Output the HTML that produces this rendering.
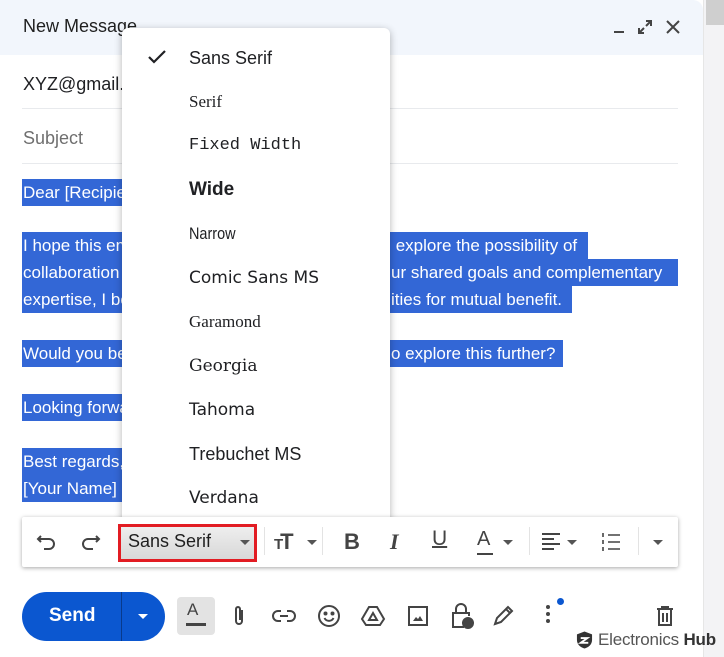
<!DOCTYPE html>
<html><head><meta charset="utf-8"><style>
*{margin:0;padding:0;box-sizing:border-box}
body{width:724px;height:657px;overflow:hidden;background:#fff;font-family:"Liberation Sans",Arial,sans-serif;position:relative;color:#202124}
.abs{position:absolute}
.hdr{left:0;top:0;width:703px;height:55px;background:#f2f6fc;border-top-right-radius:10px}
.rs{left:703px;top:0;width:21px;height:657px;background:#f3f3f5;border-left:1px solid #e6e6e6}
.hl{position:absolute;background:#3367d6;color:#fff;font-size:17px;line-height:27px;white-space:nowrap;overflow:hidden;padding-left:1px}
.menu{left:122px;top:28px;width:268px;height:499px;background:#fff;border-radius:6px;box-shadow:0 2px 8px rgba(0,0,0,.3)}
.mi{position:absolute;left:67px;font-size:18px;color:#202124;white-space:nowrap;line-height:22px}
.tb{left:22px;top:517px;width:656px;height:50px;background:#fff;box-shadow:0 1px 4px rgba(0,0,0,.35);border-radius:2px}
.ic{position:absolute;stroke:#444;fill:none;stroke-width:2}
.sep{position:absolute;top:10px;width:1px;height:28px;background:#e3e3e3}
</style></head><body>
<div class="abs rs"><div class="abs" style="left:2px;top:0;width:19px;height:25px;background:#cfcfcf"></div></div>
<div class="abs hdr"></div>
<div class="abs" style="left:23px;top:16px;font-size:18px;color:#1f1f1f">New Message</div>
<div class="abs" style="left:614px;top:31px;width:10px;height:2px;background:#444"></div>
<svg class="abs" style="left:637px;top:19px" width="16" height="16" viewBox="0 0 16 16"><path d="M9 2h5v5M14 2L9 7M7 14H2V9M2 14l5-5" stroke="#444" stroke-width="2" fill="none"/></svg>
<svg class="abs" style="left:666px;top:20px" width="14" height="14" viewBox="0 0 14 14"><path d="M1 1l12 12M13 1L1 13" stroke="#444" stroke-width="2"/></svg>
<div class="abs" style="left:23px;top:74px;font-size:18px">XYZ@gmail.com</div>
<div class="abs" style="left:22px;top:108px;width:656px;height:1px;background:#e8eaed"></div>
<div class="abs" style="left:23px;top:128px;font-size:18px;color:#6f6f6f">Subject</div>
<div class="abs" style="left:22px;top:163px;width:656px;height:1px;background:#e8eaed"></div>

<div class="hl" style="left:22px;top:179px;width:110px">Dear [Recipient's Name],</div>
<div class="hl" style="left:22px;top:206px;width:5px"></div>
<div class="hl" style="left:22px;top:232px;width:110px">I hope this email finds you well.</div>
<div class="hl" style="left:22px;top:259px;width:110px">collaboration between us.</div>
<div class="hl" style="left:22px;top:286px;width:110px">expertise, I believe</div>
<div class="hl" style="left:22px;top:313px;width:5px"></div>
<div class="hl" style="left:22px;top:340px;width:110px">Would you be available</div>
<div class="hl" style="left:22px;top:367px;width:5px"></div>
<div class="hl" style="left:22px;top:394px;width:110px">Looking forward</div>
<div class="hl" style="left:22px;top:421px;width:5px"></div>
<div class="hl" style="left:22px;top:448px;width:110px">Best regards,</div>
<div class="hl" style="left:22px;top:475px;width:100px">[Your Name]</div>
<div class="hl" style="left:390px;top:232px;width:198px">&nbsp;explore the possibility of</div>
<div class="hl" style="left:390px;top:259px;width:288px">ur shared goals and complementary</div>
<div class="hl" style="left:390px;top:286px;width:182px">ities for mutual benefit.</div>
<div class="hl" style="left:390px;top:340px;width:173px">o explore this further?</div>

<div class="abs menu">
<svg class="abs" style="left:26px;top:22px" width="18" height="14" viewBox="0 0 18 14"><path d="M1 7l5 5L17 1" stroke="#202124" stroke-width="2.2" fill="none"/></svg>
<div class="mi" style="top:19px">Sans Serif</div>
<div class="mi" style="top:63px;font-family:'Liberation Serif',serif;font-size:17px">Serif</div>
<div class="mi" style="top:107px;font-family:'Liberation Mono',monospace;font-size:17px">Fixed Width</div>
<div class="mi" style="top:151px;font-weight:bold;font-size:19px">Wide</div>
<div class="mi" style="top:195px;font-size:17px;transform:scaleX(.85);transform-origin:left">Narrow</div>
<div class="mi" style="top:239px;font-family:'DejaVu Sans',sans-serif;font-size:17px">Comic Sans MS</div>
<div class="mi" style="top:283px;font-family:'Liberation Serif',serif;font-size:17px">Garamond</div>
<div class="mi" style="top:327px;font-family:'DejaVu Serif',serif;font-size:17px">Georgia</div>
<div class="mi" style="top:371px;font-family:'DejaVu Sans',sans-serif;font-size:17px">Tahoma</div>
<div class="mi" style="top:415px">Trebuchet MS</div>
<div class="mi" style="top:459px;font-family:'DejaVu Sans',sans-serif;font-size:17px">Verdana</div>
</div>

<div class="abs tb">
<svg class="ic" style="left:14px;top:14px" width="22" height="22" viewBox="0 0 22 22"><path d="M5 5L2 8l3 3M2 8h11a5 5 0 0 1 0 10H8"/></svg>
<svg class="ic" style="left:57px;top:14px" width="22" height="22" viewBox="0 0 22 22"><path d="M17 5l3 3-3 3M20 8H9a5 5 0 0 0 0 10h5"/></svg>
<div class="abs" style="left:96px;top:7px;width:139px;height:38px;background:linear-gradient(#eee,#d8d8d8);border:3px solid #e21c23"></div>
<div class="abs" style="left:106px;top:14px;font-size:18px;color:#1f1f1f">Sans Serif</div>
<div class="abs" style="left:218px;top:23px;border:5px solid transparent;border-top:5px solid #555"></div>
<div class="sep" style="left:242px"></div>
<div class="abs" style="left:252px;top:12px;font-size:22px;font-weight:bold;color:#444;letter-spacing:-3px"><span style="font-size:15px">T</span>T</div>
<div class="abs" style="left:285px;top:23px;border:5px solid transparent;border-top:5px solid #555"></div>
<div class="sep" style="left:300px"></div>
<div class="abs" style="left:322px;top:12px;font-size:22px;font-weight:bold;color:#444">B</div>
<div class="abs" style="left:368px;top:12px;font-size:22px;font-weight:bold;font-style:italic;color:#444;font-family:'Liberation Serif',serif">I</div>
<div class="abs" style="left:410px;top:10px;font-size:21px;color:#444;text-decoration:underline;text-decoration-thickness:2px">U</div>
<div class="abs" style="left:455px;top:11px;font-size:20px;color:#444">A</div>
<div class="abs" style="left:455px;top:36px;width:16px;height:2px;background:#444"></div>
<div class="abs" style="left:481px;top:23px;border:5px solid transparent;border-top:5px solid #555"></div>
<div class="sep" style="left:507px"></div>
<svg class="ic" style="left:518px;top:14px" width="22" height="22" viewBox="0 0 22 22"><path d="M2 3h18M2 8h12M2 13h18M2 18h12"/></svg>
<div class="abs" style="left:545px;top:23px;border:5px solid transparent;border-top:5px solid #555"></div>
<svg class="ic" style="left:578px;top:14px" width="22" height="22" viewBox="0 0 22 22"><path d="M8 4h12M8 11h12M8 18h12M3 2v4M3 9v4M3 16v4" stroke-width="1.6"/></svg>
<div class="sep" style="left:616px"></div>
<div class="abs" style="left:631px;top:23px;border:5px solid transparent;border-top:5px solid #555"></div>
</div>

<div class="abs" style="left:22px;top:592px;width:143px;height:49px;background:#0b57d0;border-radius:25px"></div>
<div class="abs" style="left:121px;top:592px;width:1px;height:49px;background:#083a8c"></div>
<div class="abs" style="left:49px;top:605px;font-size:19px;font-weight:bold;color:#fff">Send</div>
<div class="abs" style="left:138px;top:614px;border:5px solid transparent;border-top:5px solid #fff"></div>
<div class="abs" style="left:177px;top:597px;width:38px;height:38px;background:#e3e3e3;border-radius:4px"></div>
<div class="abs" style="left:187px;top:600px;font-size:17px;color:#444">A</div>
<div class="abs" style="left:186px;top:623px;width:20px;height:3px;background:#444"></div>
<svg class="ic" style="left:231px;top:604px" width="16" height="24" viewBox="0 0 16 24"><path d="M11 6v11a3 3 0 0 1-6 0V5a2 2 0 0 1 4 0v11"/></svg>
<svg class="ic" style="left:272px;top:606px" width="24" height="20" viewBox="0 0 24 20"><path d="M9 5H6a5 5 0 0 0 0 10h3M15 5h3a5 5 0 0 1 0 10h-3M8 10h8"/></svg>
<svg class="ic" style="left:317px;top:604px" width="24" height="24" viewBox="0 0 24 24"><circle cx="12" cy="12" r="10"/><circle cx="8.5" cy="9.5" r="1" fill="#444"/><circle cx="15.5" cy="9.5" r="1" fill="#444"/><path d="M7.5 14a5 5 0 0 0 9 0"/></svg>
<svg class="ic" style="left:360px;top:604px" width="26" height="24" viewBox="0 0 26 24"><path d="M9 3h8l7 12-4 6H6l-4-6z"/><path d="M13 9l4 7H9z"/></svg>
<svg class="ic" style="left:407px;top:605px" width="22" height="22" viewBox="0 0 22 22"><rect x="2" y="2" width="18" height="18"/><path d="M6 16l3-4 2 2 2-3 3 5z" fill="#444" stroke="none"/></svg>
<svg class="ic" style="left:449px;top:602px" width="26" height="28" viewBox="0 0 26 28"><path d="M7 11V7a5 5 0 0 1 10 0v4M15 25H4V11h16v3"/><circle cx="19" cy="21" r="5" fill="#444"/></svg>
<svg class="ic" style="left:491px;top:604px" width="24" height="24" viewBox="0 0 24 24"><path d="M4 20l2-6 9-9 4 4-9 9zM15 5l2-2 4 4-2 2"/></svg>
<div class="abs" style="left:546px;top:605px;width:4px;height:4px;border-radius:2px;background:#444;box-shadow:0 7px 0 #444,0 14px 0 #444"></div>
<div class="abs" style="left:557px;top:598px;width:7px;height:7px;border-radius:4px;background:#0b57d0"></div>
<svg class="ic" style="left:656px;top:605px" width="18" height="22" viewBox="0 0 18 22"><path d="M1 4h16M6 4V2h6v2M3 4v16h12V4M7 8v9M11 8v9"/></svg>
<svg class="abs" style="left:576px;top:630px" width="17" height="20" viewBox="0 0 18 20"><path d="M9 1l8 3v6c0 5-4 8-8 9-4-1-8-4-8-9V4z" fill="#333"/><path d="M5 8h7l-7 5h8" stroke="#fff" stroke-width="2" fill="none"/></svg>
<div class="abs" style="left:598px;top:630px;font-size:17px;color:#555;white-space:nowrap;letter-spacing:-0.2px">Electronics <b style="color:#333">Hub</b></div>
</body></html>
